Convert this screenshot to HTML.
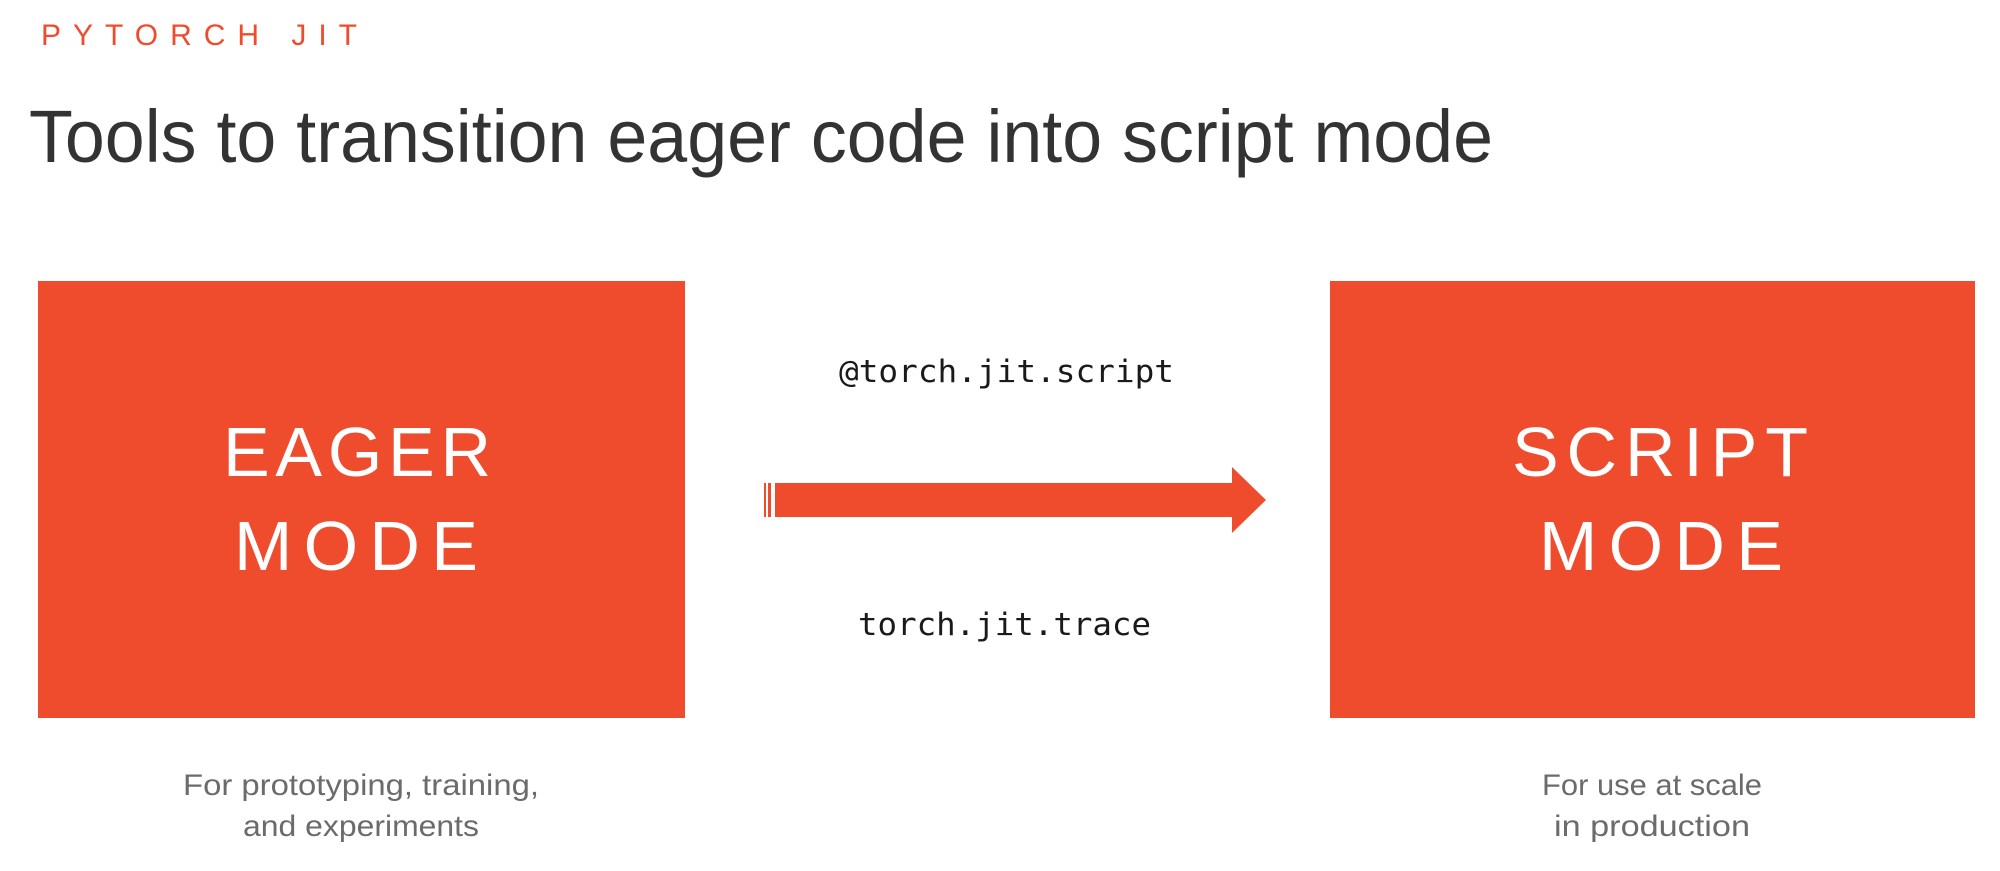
<!DOCTYPE html>
<html><head><meta charset="utf-8"><style>
html,body{margin:0;padding:0;background:#fff;width:2000px;height:871px;overflow:hidden}
svg{display:block}
</style></head><body>
<svg width="2000" height="871" viewBox="0 0 2000 871" xmlns="http://www.w3.org/2000/svg">
<text x="41" y="45" font-family="Liberation Sans, sans-serif" font-size="30" fill="#EF4C2D" textLength="316" lengthAdjust="spacing">PYTORCH JIT</text>
<text x="29" y="162" font-family="Liberation Sans, sans-serif" font-size="74" fill="#333" textLength="1464" lengthAdjust="spacingAndGlyphs">Tools to transition eager code into script mode</text>
<rect x="38" y="281" width="647" height="437" fill="#EF4C2D"/>
<rect x="1330" y="281" width="645" height="437" fill="#EF4C2D"/>
<g font-family="Liberation Sans, sans-serif" font-size="70" fill="#fff">
<text x="223" y="476" textLength="268" lengthAdjust="spacing">EAGER</text>
<text x="234" y="570" textLength="244" lengthAdjust="spacing">MODE</text>
<text x="1512" y="476" textLength="296" lengthAdjust="spacing">SCRIPT</text>
<text x="1539" y="570" textLength="244" lengthAdjust="spacing">MODE</text>
</g>
<g font-family="DejaVu Sans Mono, Liberation Mono, monospace" font-size="31" fill="#1a1a1a">
<text x="839" y="382" textLength="335" lengthAdjust="spacingAndGlyphs">@torch.jit.script</text>
<text x="858" y="635" textLength="293" lengthAdjust="spacingAndGlyphs">torch.jit.trace</text>
</g>
<rect x="764" y="483" width="2" height="34" fill="#EF4C2D"/>
<rect x="768" y="483" width="3" height="34" fill="#EF4C2D"/>
<polygon points="775,483 1232,483 1232,467 1266,500 1232,533 1232,517 775,517" fill="#EF4C2D"/>
<g font-family="Liberation Sans, sans-serif" font-size="30" fill="#6b6b6b" text-anchor="middle">
<text x="361" y="795" textLength="356" lengthAdjust="spacingAndGlyphs">For prototyping, training,</text>
<text x="361" y="836" textLength="236" lengthAdjust="spacingAndGlyphs">and experiments</text>
<text x="1652" y="795" textLength="220" lengthAdjust="spacingAndGlyphs">For use at scale</text>
<text x="1652" y="836" textLength="196" lengthAdjust="spacingAndGlyphs">in production</text>
</g>
</svg>
</body></html>
